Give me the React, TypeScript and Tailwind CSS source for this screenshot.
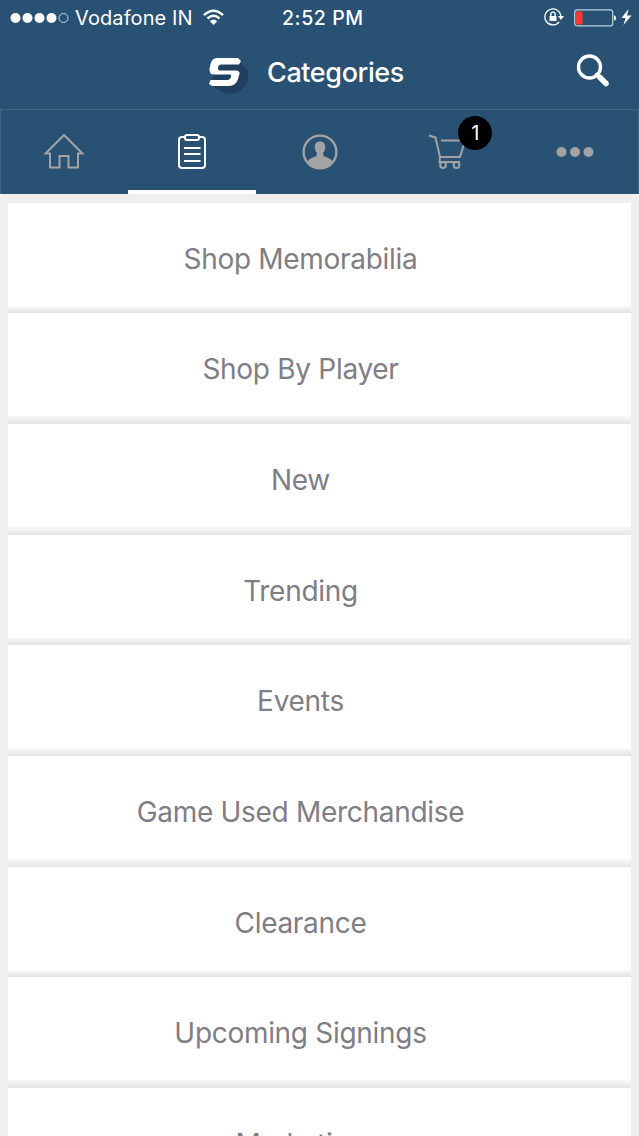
import clsx from 'clsx'
import { ReactNode } from 'react'

const categories = [
  'Shop Memorabilia',
  'Shop By Player',
  'New',
  'Trending',
  'Events',
  'Game Used Merchandise',
  'Clearance',
  'Upcoming Signings',
  'Marketing',
]

function StatusBar() {
  return (
    <div className="relative flex h-9 items-center justify-between pl-[10px] pr-[7px]">
      <div className="flex items-center">
        <svg width="59" height="12" viewBox="0 0 59 12" fill="#fff">
          <circle cx="5.5" cy="6" r="5" />
          <circle cx="17.5" cy="6" r="5" />
          <circle cx="29.5" cy="6" r="5" />
          <circle cx="41.5" cy="6" r="5" />
          <circle cx="53.5" cy="6" r="4.5" fill="none" stroke="#b5dcf0" strokeWidth="1" />
        </svg>
        <span className="ml-[6px] w-[118px] whitespace-nowrap text-[20px] leading-9 tracking-[0.1px]">Vodafone IN</span>
        <svg className="-mt-[2px] ml-[10px]" width="21" height="17" viewBox="0 0 21 17" fill="none" stroke="#fff" strokeWidth="2.4">
          <path d="M1 6.2Q10.5-2.8 20 6.2" />
          <path d="M4.5 9.5Q10.5 4 16.5 9.5" />
          <path d="M10.5 16L6.8 12.2Q10.5 9 14.2 12.2Z" fill="#fff" stroke="none" />
        </svg>
      </div>
      <span className="absolute left-[282px] whitespace-nowrap text-[19.5px] font-medium leading-9 tracking-[0.6px]">2:52 PM</span>
      <div className="flex items-center">
        <svg className="-mt-[2px]" width="20" height="18" viewBox="0 0 20 18">
          <path d="M15.2 13.8A8 8 0 1 1 16.8 8" fill="none" stroke="#fff" strokeWidth="1.3" />
          <path d="M14 8h6l-3 4z" fill="#fff" />
          <path d="M5.5 8h7v5h-7z" fill="#fff" />
          <path d="M6.8 8V6.3a2.2 2.2 0 0 1 4.4 0V8" fill="none" stroke="#fff" strokeWidth="1.4" />
        </svg>
        <svg className="-mt-[1px] ml-[10px]" width="43" height="18" viewBox="0 0 43 18">
          <rect x="0.7" y="0.9" width="38" height="16" rx="2.5" fill="none" stroke="#b9d3e3" strokeWidth="1.2" />
          <rect x="2" y="2.5" width="6.5" height="13" rx="1" fill="#f83a30" />
          <path d="M40 6.2q2 .3 2 2.8t-2 2.8z" fill="#fff" />
        </svg>
        <svg className="-mt-[2px] ml-[4px]" width="11" height="18" viewBox="0 0 11 18" fill="#fff">
          <path d="M7.5 1L0.5 10h4L2.5 17l8-9.500H6z" />
        </svg>
      </div>
    </div>
  )
}

function Header() {
  return (
    <div className="flex h-[73px] items-center pl-[208px] pr-[29px]">
      <svg className="mt-[8px]" width="42" height="42" viewBox="0 0 42 42">
        <path d="M33 7l7 8q2 12-7 19-8 7-19 2L2 28 10 10z" fill="#1c3651" opacity=".6" />
        <path d="M9 2H30L33 5 31 8.500H13Q10.500 8.500 10 11.500T12 14.500H28Q32 14.500 31.500 18L30 23Q28 30 21 30H4L1 28 2.500 24H19Q22 24 23 21T21 18.500H6Q1 18.500 1.500 13L2.500 8Q4 2 9 2Z" fill="#fff" />
      </svg>
      <h1 className="ml-[17px] whitespace-nowrap text-[27px] font-medium leading-9 tracking-[-0.4px]">Categories</h1>
      <svg className="-mt-[4px] ml-auto" width="34" height="34" viewBox="0 0 34 34" fill="none" stroke="#fff" strokeLinecap="round">
        <circle cx="13.500" cy="13" r="11" strokeWidth="3.400" />
        <path d="M24 23.500L30 29.500" strokeWidth="5.500" />
        <path d="M20.500 20l3 3" strokeWidth="3" />
      </svg>
    </div>
  )
}

function Tab({ active, children }: { active?: boolean, children: ReactNode }) {
  return (
    <button
      className={clsx(
        'relative flex flex-1 items-center justify-center border-b-4 pt-[4px]',
        active ? 'border-white text-white' : 'border-transparent text-[#a3a3a5]',
      )}
    >
      {children}
    </button>
  )
}

function TabBar() {
  return (
    <div className="flex h-[85px] border-t border-[#3c6b80] shadow-[inset_1px_0_0_#3c6b80,inset_-1px_0_0_#3c6b80]">
      <Tab>
        <svg width="40" height="38" viewBox="0 0 40 38" fill="none" stroke="currentColor" strokeWidth="2">
          <path d="M20 2L1.500 20.500H6v14h9.500V23h9v11.500H34v-14h4.500z" />
        </svg>
      </Tab>
      <Tab active>
        <svg width="30" height="38" viewBox="0 0 30 38" fill="none" stroke="currentColor" strokeWidth="2">
          <rect x="2" y="4" width="26" height="31" rx="3" />
          <rect x="8" y="2" width="14" height="5" rx="2" fill="#295173" />
          <path d="M7 15h16.500M7 21h16.500M7 28h16.500" strokeWidth="1.800" />
        </svg>
      </Tab>
      <Tab>
        <svg className="ml-px" width="36" height="36" viewBox="0 0 36 36">
          <circle cx="18" cy="18" r="16.400" fill="none" stroke="currentColor" strokeWidth="2.400" />
          <path d="M18 7.500c3.800 0 5.400 2.500 5.200 6-.2 2.800-1 4-2 5v2.500c1 2.300 7 2.500 9 6Q26 34 18 34T5.800 27c2-3.500 8-3.700 9-6v-2.500c-1-1-1.800-2.200-2-5-.2-3.500 1.400-6 5.200-6z" fill="currentColor" />
        </svg>
      </Tab>
      <Tab>
        <svg width="38" height="38" viewBox="0 0 38 38" fill="none" stroke="currentColor" strokeWidth="2">
          <path d="M1 2.500L7.500 4.500 12 24 11.500 29H32M13 7.500H37L32 24H12" />
          <circle cx="15" cy="32" r="2.900" />
          <circle cx="28.500" cy="32" r="2.900" />
        </svg>
        <span className="absolute left-[75px] top-[6px] flex size-[34px] items-center justify-center rounded-full bg-black text-[20px] text-white">1</span>
      </Tab>
      <Tab>
        <svg width="38" height="12" viewBox="0 0 38 12" fill="currentColor">
          <circle cx="5.500" cy="6" r="5" />
          <circle cx="19" cy="6" r="5" />
          <circle cx="32.500" cy="6" r="5" />
        </svg>
      </Tab>
    </div>
  )
}

function App() {
  return (
    <div className="h-[1136px] w-[639px] overflow-hidden bg-[#efeff0] font-[Inter,'Liberation_Sans',sans-serif]">
      <header className="bg-[#295173] text-white">
        <StatusBar />
        <Header />
        <TabBar />
      </header>
      <main className="px-2 pt-[8.5px]">
        {categories.map(name => (
          <div key={name} className="flex h-[110.7px] flex-col">
            <div className="flex h-[103px] items-center justify-center bg-white pr-[38px] pt-[9px] text-[28px] tracking-[-0.3px] text-[#817d84]">
              {name}
            </div>
            <div className="grow bg-linear-to-b from-[#f8f7f9] to-[#e4e3e6]" />
          </div>
        ))}
      </main>
    </div>
  )
}

export default App
